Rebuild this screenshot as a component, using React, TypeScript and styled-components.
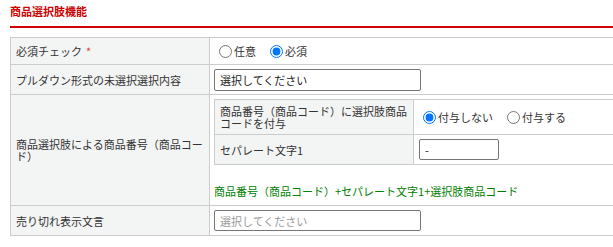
import React from "react";
import styled, { createGlobalStyle } from "styled-components";

const Global = createGlobalStyle`
  html, body { margin: 0; padding: 0; background: #fff; overflow: hidden; }
  body {
    font-family: "Noto Sans CJK JP", "Noto Sans", sans-serif;
    font-size: 11px;
    color: #333;
  }
`;

const Page = styled.div`
  padding: 0 0 0 10px;
`;

const Title = styled.h2`
  margin: 0;
  height: 28px;
  box-sizing: border-box;
  display: flex;
  align-items: center;
  padding-bottom: 4px;
  font-size: 11px;
  font-weight: bold;
  color: #c00;
  border-bottom: 2px solid #c00;
`;

const Grid = styled.div<{ $rows: string; $mt?: number }>`
  display: grid;
  grid-template-columns: 198px 1fr;
  grid-template-rows: ${(p) => p.$rows};
  gap: 1px;
  background: #ccc;
  border: 1px solid #ccc;
  border-right: none;
  margin-top: ${(p) => p.$mt ?? 0}px;
`;

const Label = styled.div`
  background: #f3f4f4;
  display: flex;
  align-items: center;
  padding: 0 4px 0 5px;
  line-height: 12px;
  color: #333;
`;

const Value = styled.div<{ $pl?: number }>`
  background: #fff;
  display: flex;
  align-items: center;
  padding-left: ${(p) => p.$pl ?? 4}px;
`;

const ValueStack = styled.div`
  background: #fff;
  display: flex;
  flex-direction: column;
  padding: 4px 0 0 4px;
`;

const Req = styled.span`
  color: #e33;
  margin-left: 4px;
`;

const RadioLabel = styled.label`
  display: inline-flex;
  align-items: center;
  margin-right: 9px;
  color: #333;
`;

const Radio = styled.input`
  width: 13px;
  height: 13px;
  margin: 0 2px 0 5px;
`;

const TextInput = styled.input<{ $w: number; $h: number }>`
  box-sizing: border-box;
  width: ${(p) => p.$w}px;
  height: ${(p) => p.$h}px;
  border: 1px solid #767676;
  border-radius: 2px;
  padding: 0 5px;
  font-family: "Noto Sans CJK JP", "Noto Sans", sans-serif;
  font-size: 11px;
  color: #222;
  &::placeholder { color: #999; }
`;

const Note = styled.div`
  color: #008000;
  margin-top: 18px;
`;

export default function App() {
  return (
    <>
      <Global />
      <Page>
        <Title>商品選択肢機能</Title>
        <Grid $rows="26px 29px 110px 29px" $mt={9}>
          <Label>
            必須チェック<Req>*</Req>
          </Label>
          <Value>
            <RadioLabel>
              <Radio type="radio" name="req" />
              任意
            </RadioLabel>
            <RadioLabel>
              <Radio type="radio" name="req" defaultChecked />
              必須
            </RadioLabel>
          </Value>

          <Label>プルダウン形式の未選択選択内容</Label>
          <Value>
            <TextInput $w={207} $h={22} defaultValue="選択してください" />
          </Value>

          <Label>商品選択肢による商品番号（商品コード）</Label>
          <ValueStack>
            <Grid $rows="34px 29px">
              <Label>商品番号（商品コード）に選択肢商品コードを付与</Label>
              <Value>
                <RadioLabel>
                  <Radio type="radio" name="add" defaultChecked />
                  付与しない
                </RadioLabel>
                <RadioLabel>
                  <Radio type="radio" name="add" />
                  付与する
                </RadioLabel>
              </Value>
              <Label>セパレート文字1</Label>
              <Value $pl={5}>
                <TextInput $w={80} $h={21} defaultValue="-" />
              </Value>
            </Grid>
            <Note>商品番号（商品コード）+セパレート文字1+選択肢商品コード</Note>
          </ValueStack>

          <Label>売り切れ表示文言</Label>
          <Value>
            <TextInput $w={207} $h={21} placeholder="選択してください" />
          </Value>
        </Grid>
      </Page>
    </>
  );
}
